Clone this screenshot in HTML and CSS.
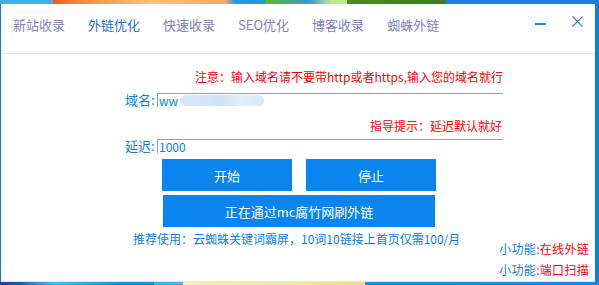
FILE: index.html
```html
<!DOCTYPE html>
<html>
<head>
    <meta charset="utf-8">
    <title>外链优化</title>
    <link rel="stylesheet" href="styles.css">
</head>
<body>
    <div class="top-strip"></div>

    <div class="window">
        <div class="tabbar">
            <span class="tab">新站收录</span>
            <span class="tab active">外链优化</span>
            <span class="tab">快速收录</span>
            <span class="tab">SEO优化</span>
            <span class="tab">博客收录</span>
            <span class="tab">蜘蛛外链</span>

            <div class="controls">
                <span class="min-btn"></span>
                <svg class="close-btn" width="11" height="11" viewBox="0 0 11 11">
                    <path d="M0.5 0.5 L10.5 10.5 M10.5 0.5 L0.5 10.5" stroke="#2b80e0" stroke-width="1.1" fill="none"/>
                </svg>
            </div>
        </div>

        <div class="content">
            <div class="form">
                <p class="note">注意：输入域名请不要带http或者https,输入您的域名就行</p>
                <div class="row">
                    <label>域名:</label>
                    <div class="field">ww<span class="blur"></span></div>
                </div>

                <p class="note note-2">指导提示：延迟默认就好</p>
                <div class="row row-2">
                    <label>延迟:</label>
                    <div class="field">1000</div>
                </div>

                <div class="buttons">
                    <div class="btn-pair">
                        <button class="btn">开始</button>
                        <button class="btn">停止</button>
                    </div>
                    <button class="btn btn-wide">正在通过mc腐竹网刷外链</button>
                </div>

                <p class="tip">推荐使用：云蜘蛛关键词霸屏，10词10链接上首页仅需100/月</p>
            </div>

            <div class="extras">
                <div class="extra">小功能:<span class="red">在线外链</span></div>
                <div class="extra">小功能:<span class="red">端口扫描</span></div>
            </div>
        </div>
    </div>

    <div class="bottom-strip"></div>
</body>
</html>
```

FILE: styles.css
```css
/* ページ全体 */
body {
    margin: 0;
    height: 285px;
    overflow: hidden;
    background: #0c7fdc;
    font-family: "Noto Sans CJK SC", "Noto Sans", sans-serif;
}

.top-strip {
    height: 4px;
    background: linear-gradient(90deg,
        #3bb0ea 0, #3bb0ea 53px,
        #f05a20 53px, #f48a40 80px, #f8c478 150px, #f6a868 225px,
        #1e9be0 235px, #1e9be0 265px,
        #62b22c 265px, #3a9ad8 310px,
        #b8e890 330px, #b8e890 347px,
        #4a8a20 347px, #3c7c1c 445px,
        #1a85e0 447px, #1a80de 100%);
}

.bottom-strip {
    height: 3px;
    background: linear-gradient(90deg,
        #0a4a9a 0, #1060b0 20px, #2a90e0 35px, #48bcf0 55px,
        #1a8ee0 120px, #1a8ee0 154px,
        #40b4ee 154px, #40b4ee 183px,
        #f6f0a8 183px, #f2e890 300px, #f0dc70 365px,
        #1a90e0 365px, #1a88de 100%);
}

.window {
    margin: 0 4px 0 1px;
    height: 277px;
    background: #fff;
    border-bottom: 1px solid #e4e4e4;
}

/* タブ */
.tabbar {
    display: flex;
    align-items: flex-start;
    gap: 23px;
    height: 50px;
    box-sizing: border-box;
    padding: 12px 12px 0 12px;
    border-bottom: 1px solid #e8e8e8;
}

.tab {
    font-size: 13px;
    line-height: 18px;
    color: #7f82b8;
}

.tab.active {
    color: #1f6fd2;
}

.controls {
    margin-left: auto;
    display: flex;
    align-items: flex-start;
}

.min-btn {
    display: block;
    flex: none;
    width: 11px;
    height: 2px;
    margin: 7px 26px 0 0;
    background: #2a84e4;
}

.close-btn {
    display: block;
    flex: none;
}

/* フォーム */
.content {
    display: flex;
    flex-direction: column;
}

.form {
    margin-left: 124px;
    width: 378px;
    font-size: 12px;
}

.note {
    margin: 15px 0 0 0;
    line-height: 16px;
    text-align: right;
    color: #ff0000;
}

.note-2 {
    margin-top: 11px;
    padding-right: 1px;
}

.row {
    display: flex;
    margin-top: 8px;
    height: 14px;
}

.row-2 {
    margin-top: 5px;
}

.row label {
    width: 32px;
    font-size: 13px;
    line-height: 14px;
    color: #0b7ee6;
}

.field {
    flex: 1;
    display: flex;
    align-items: center;
    border-top: 1px solid #a0a0a0;
    border-left: 1px solid #a0a0a0;
    padding-left: 1px;
    font-size: 12px;
    line-height: 13px;
    color: #0b7ee6;
}

.blur {
    display: inline-block;
    width: 84px;
    height: 11px;
    margin-left: 2px;
    border-radius: 6px;
    background: linear-gradient(90deg, #d8e8f8, #cfe2f6 50%, #e2eef9 70%, #dce8f5);
    filter: blur(0.6px);
}

.buttons {
    margin: 6px 0 0 37px;
    width: 274px;
}

.btn-pair {
    display: flex;
    justify-content: space-between;
}

.btn {
    display: block;
    width: 130px;
    height: 32px;
    border: none;
    padding: 0;
    background: #0a85ef;
    color: #fff;
    font-family: "Noto Sans CJK SC", sans-serif;
    font-size: 13px;
}

.btn-wide {
    width: 272px;
    margin: 4px 0 0 1px;
}

.tip {
    margin: 5px 0 0 8px;
    line-height: 14px;
    color: #0b7ee6;
    white-space: nowrap;
}

.extras {
    align-self: flex-end;
    margin: -4px 6px 0 0;
    font-size: 12px;
    letter-spacing: 0.3px;
}

.extra {
    line-height: 14px;
    color: #0b7ee6;
}

.extra + .extra {
    margin-top: 7px;
}

.red {
    color: #ff0000;
}
```
